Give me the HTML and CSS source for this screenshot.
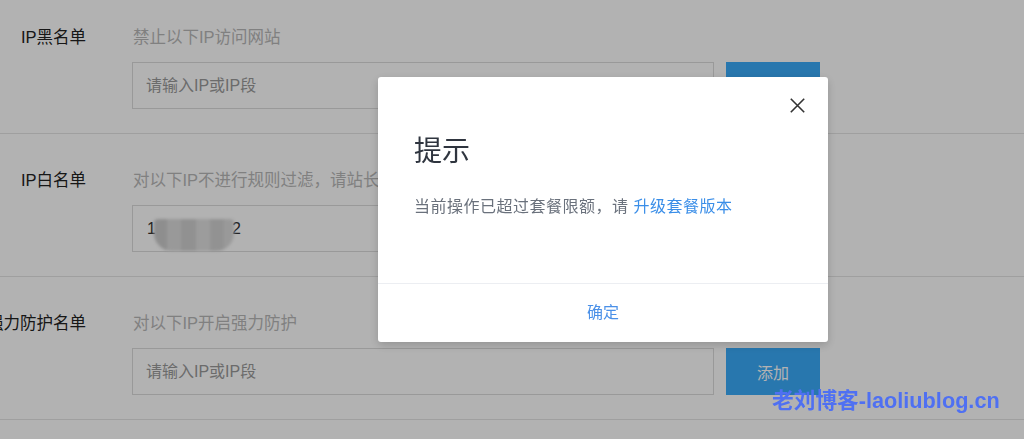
FILE: index.html
```html
<!DOCTYPE html>
<html lang="zh-CN">
<head>
<meta charset="utf-8">
<title>IP名单设置</title>
<link rel="stylesheet" href="styles.css">
</head>
<body>
<div class="list">
  <div class="row">
    <div class="label">IP黑名单</div>
    <div class="content">
      <div class="desc">禁止以下IP访问网站</div>
      <div class="field">
        <div class="input placeholder">请输入IP或IP段</div>
        <div class="btn">添加</div>
      </div>
    </div>
  </div>
  <div class="row">
    <div class="label">IP白名单</div>
    <div class="content">
      <div class="desc">对以下IP不进行规则过滤，请站长谨慎添加</div>
      <div class="field">
        <div class="input value">1<span class="blur"></span>2</div>
        <div class="btn">添加</div>
      </div>
    </div>
  </div>
  <div class="row">
    <div class="label">强力防护名单</div>
    <div class="content">
      <div class="desc">对以下IP开启强力防护</div>
      <div class="field">
        <div class="input placeholder">请输入IP或IP段</div>
        <div class="btn">添加</div>
      </div>
    </div>
  </div>
</div>

<div class="mask"></div>

<div class="modal">
  <div class="close">
    <svg width="15" height="15" viewBox="0 0 15 15"><path d="M0.8 0.8 L14.2 14.2 M14.2 0.8 L0.8 14.2" stroke="#333" stroke-width="1.6" fill="none"/></svg>
  </div>
  <div class="modal-body">
    <div class="modal-title">提示</div>
    <div class="modal-msg">当前操作已超过套餐限额，请 <span class="link">升级套餐版本</span></div>
  </div>
  <div class="modal-footer">确定</div>
</div>

<div class="watermark">老刘博客-laoliublog.cn</div>
</body>
</html>
```

FILE: styles.css
```css
html, body {
  margin: 0;
  padding: 0;
  background: #ffffff;
  overflow: hidden;
}
body {
  width: 1024px;
  height: 439px;
  font-family: "Liberation Sans", "Noto Sans CJK SC", sans-serif;
  font-size: 16px;
  color: #333;
}
.list {
  margin-top: -9px;
}
.row {
  display: flex;
  padding: 36px 0 24px 0;
  border-bottom: 1px solid #e4e4e4;
}
.label {
  width: 86px;
  flex-shrink: 0;
  text-align: right;
  font-size: 16.5px;
  line-height: 20px;
  white-space: nowrap;
  direction: rtl;
  color: #222;
}
.content {
  margin-left: 46px;
  display: flex;
  flex-direction: column;
}
.desc {
  font-size: 16.5px;
  line-height: 20px;
  color: #b8b8b8;
  margin-bottom: 15px;
  padding-left: 1px;
  white-space: nowrap;
}
.field {
  display: flex;
  gap: 12px;
}
.input {
  width: 567px;
  height: 45px;
  border: 1px solid #dcdcdc;
  padding-left: 13px;
  display: flex;
  align-items: center;
  line-height: 20px;
}
.placeholder {
  color: #9a9a9a;
}
.value {
  color: #333;
  padding-left: 14px;
}
.blur {
  display: inline-block;
  width: 80px;
  height: 32px;
  margin: 12px -2px 0 -2px;
  border-radius: 4px 4px 18px 18px;
  background: linear-gradient(90deg, #cccccc 0 16%, #dcdcdc 16% 34%, #d0d0d0 34% 52%, #e0e0e0 52% 70%, #d2d2d2 70% 88%, #dcdcdc 88%);
  filter: blur(1.5px);
}
.btn {
  width: 94px;
  height: 47px;
  background: #3aabfa;
  color: #fff;
  display: flex;
  align-items: center;
  justify-content: center;
}
.mask {
  position: fixed;
  inset: 0;
  background: rgba(0, 0, 0, 0.3);
}
.modal {
  position: fixed;
  left: 378px;
  top: 77px;
  width: 450px;
  height: 265px;
  background: #fff;
  border-radius: 3px;
  box-shadow: 0 3px 10px rgba(0, 0, 0, 0.18);
  display: flex;
  flex-direction: column;
}
.close {
  position: absolute;
  left: 412px;
  top: 21px;
  width: 15px;
  height: 15px;
  line-height: 0;
}
.modal-body {
  height: 206px;
  box-sizing: border-box;
  padding: 57px 36px 0 36px;
}
.modal-title {
  font-size: 28px;
  line-height: 36px;
  color: #2f353f;
}
.modal-msg {
  margin-top: 25px;
  line-height: 24px;
  color: #6a717c;
  letter-spacing: 0.5px;
  white-space: nowrap;
}
.link {
  color: #3a8ee8;
}
.modal-footer {
  border-top: 1px solid #eceef2;
  flex: 1;
  display: flex;
  align-items: center;
  justify-content: center;
  color: #4a90e8;
  padding-bottom: 5px;
}
.watermark {
  position: fixed;
  left: 772px;
  top: 387px;
  font-size: 21.7px;
  line-height: 28px;
  font-weight: bold;
  color: #4f70f2;
  white-space: nowrap;
}
```
